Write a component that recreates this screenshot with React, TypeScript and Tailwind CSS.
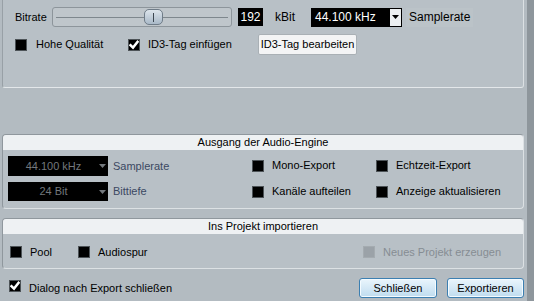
import React from "react";

const Check = ({ checked = false, disabled = false }: { checked?: boolean; disabled?: boolean }) => (
  <span
    className={
      "relative inline-flex w-[12px] h-[12px] shrink-0 items-center justify-center border " +
      (disabled ? "bg-[#9ba2a8] border-[#a4abb0]" : "bg-black border-[#4d5357]")
    }
  >
    {checked && (
      <svg width="10" height="10" viewBox="0 0 10 10" className="absolute left-[0px] top-[0px]">
        <path d="M1.5 5.2 L4 7.6 L8.6 1.8" stroke="white" strokeWidth="2.4" fill="none" strokeLinecap="square" />
      </svg>
    )}
  </span>
);

const Arrow = ({ color }: { color: string }) => (
  <svg width="7" height="4" viewBox="0 0 7 4">
    <path d="M0 0 L7 0 L3.5 4 Z" fill={color} />
  </svg>
);

export default function App() {
  return (
    <div
      className="w-[534px] h-[301px] flex bg-[#b3bbc1] text-[11px] text-black overflow-hidden whitespace-nowrap"
      style={{ fontFamily: '"Liberation Sans", Arial, sans-serif' }}
    >
      <div className="w-[527px] flex flex-col">
        {/* Top panel */}
        <div className="ml-[2px] w-[522px] h-[88px] shrink-0 bg-[#b8c0c6] border-l border-r border-b border-l-[#98a0a6] border-r-[#dce1e4] border-b-[#e3e7ea] rounded-b-[3px] flex flex-col pl-[12px]">
          <div className="mt-[7px] h-[20px] flex items-center">
            <span className="w-[37px]">Bitrate</span>
            <div className="w-[180px] h-[20px] rounded-[3px] border border-[#8d959b] bg-[#bfc6cb] flex items-center relative">
              <div className="w-full h-[1px] bg-[#7e878d] mx-[3px]" />
              <div className="absolute left-[91px] top-[1px] w-[19px] h-[16px] rounded-[5px] border border-[#6f7c88] bg-gradient-to-b from-[#dde5ec] to-[#a9b9c8] flex items-center justify-center">
                <div className="w-[1px] h-[9px] bg-[#3c4650]" />
              </div>
            </div>
            <div className="ml-[6px] w-[25px] h-[18px] bg-black text-white flex items-center justify-center text-[12px]">192</div>
            <span className="ml-[12px] w-[36px] text-[12px]">kBit</span>
            <div className="w-[91px] h-[19px] bg-black text-white flex items-center pl-[4px] text-[12px]">
              <span className="flex-1">44.100 kHz</span>
              <div className="w-[11px] h-[17px] mr-[1px] bg-[#eceff1] flex items-center justify-center">
                <Arrow color="#000" />
              </div>
            </div>
            <span className="ml-[4px] h-[19px] px-[3px] flex items-center bg-[#bbc3c8] text-[12px]">Samplerate</span>
          </div>
          <div className="mt-[7px] h-[21px] flex items-center">
            <Check />
            <span className="ml-[9px] w-[92px]">Hohe Qualität</span>
            <Check checked />
            <span className="ml-[8px] w-[110px]">ID3-Tag einfügen</span>
            <button className="h-[21px] w-[99px] rounded-[2px] border border-[#a9b0b5] bg-[#f3f4f5] text-[11px] flex items-center justify-center">
              ID3-Tag bearbeiten
            </button>
          </div>
        </div>

        {/* Middle panel */}
        <div className="mt-[46px] ml-[2px] w-[522px] h-[75px] shrink-0 bg-[#b8c0c6] border border-t-[#8f979d] border-l-[#8f979d] border-r-[#dce1e4] border-b-[#dce1e4] rounded-[4px] flex flex-col overflow-hidden">
          <div className="h-[15px] bg-[#eef1f3] flex items-center justify-center">Ausgang der Audio-Engine</div>
          <div className="flex pl-[5px] pt-[6px]">
            <div className="w-[244px] flex flex-col gap-[6px]">
              <div className="flex items-center h-[20px]">
                <div className="w-[100px] h-[20px] bg-black flex items-center text-[#73787d] text-[11px]">
                  <span className="flex-1 text-center pl-[2px]">44.100 kHz</span>
                  <span className="mr-[2px] ml-[2px]"><Arrow color="#73787d" /></span>
                </div>
                <span className="ml-[5px] text-[#3b4862]">Samplerate</span>
              </div>
              <div className="flex items-center h-[19px]">
                <div className="w-[100px] h-[19px] bg-black flex items-center text-[#73787d] text-[11px]">
                  <span className="flex-1 text-center pl-[2px]">24 Bit</span>
                  <span className="mr-[2px] ml-[2px]"><Arrow color="#73787d" /></span>
                </div>
                <span className="ml-[5px] text-[#3b4862]">Bittiefe</span>
              </div>
            </div>
            <div className="w-[124px] flex flex-col gap-[13px] pt-[3px]">
              <div className="flex items-center h-[13px]"><Check /><span className="ml-[8px]">Mono-Export</span></div>
              <div className="flex items-center h-[13px]"><Check /><span className="ml-[8px]">Kanäle aufteilen</span></div>
            </div>
            <div className="flex flex-col gap-[13px] pt-[3px]">
              <div className="flex items-center h-[13px]"><Check /><span className="ml-[8px]">Echtzeit-Export</span></div>
              <div className="flex items-center h-[13px]"><Check /><span className="ml-[8px]">Anzeige aktualisieren</span></div>
            </div>
          </div>
        </div>

        {/* Bottom panel */}
        <div className="mt-[9px] ml-[2px] w-[522px] h-[51px] shrink-0 bg-[#b8c0c6] border border-t-[#8f979d] border-l-[#8f979d] border-r-[#dce1e4] border-b-[#dce1e4] rounded-[4px] flex flex-col overflow-hidden">
          <div className="h-[15px] bg-[#eef1f3] flex items-center justify-center">Ins Projekt importieren</div>
          <div className="flex items-center pl-[7px] mt-[12px] h-[12px]">
            <Check />
            <span className="ml-[8px] w-[48px]">Pool</span>
            <Check />
            <span className="ml-[8px] w-[265px]">Audiospur</span>
            <Check disabled />
            <span className="ml-[8px] text-[#868d93]">Neues Projekt erzeugen</span>
          </div>
        </div>

        {/* Footer */}
        <div className="flex items-center mt-[9px] h-[20px]">
          <span className="ml-[9px]"><Check checked /></span>
          <span className="ml-[8px]">Dialog nach Export schließen</span>
          <div className="ml-auto mr-[3px] flex gap-[10px]">
            <button className="w-[78px] h-[20px] rounded-[3px] border border-[#3c7fb1] bg-gradient-to-b from-[#eaf5fc] to-[#bfdcef] shadow-[inset_0_0_0_1px_#f4fbff] text-[11px] flex items-center justify-center">Schließen</button>
            <button className="w-[77px] h-[20px] rounded-[3px] border border-[#3c7fb1] bg-gradient-to-b from-[#eaf5fc] to-[#bfdcef] shadow-[inset_0_0_0_1px_#f4fbff] text-[11px] flex items-center justify-center">Exportieren</button>
          </div>
        </div>
      </div>
      <div className="w-[7px] h-full bg-[#8e969c]" />
    </div>
  );
}
